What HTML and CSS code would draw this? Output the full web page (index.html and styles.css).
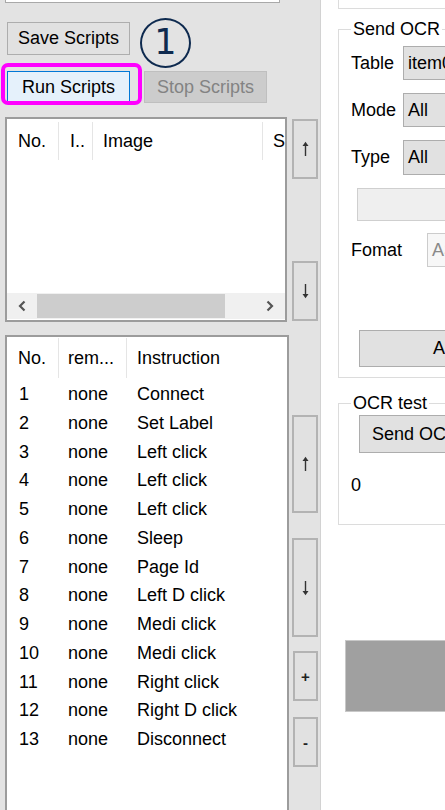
FILE: index.html
```html
<!DOCTYPE html>
<html>
<head>
<meta charset="utf-8">
<link rel="stylesheet" href="styles.css">
</head>
<body>
<div class="app">
  <div class="left">
    <div class="topbox"></div>
    <div class="save-row"><div class="btn">Save Scripts</div></div>
    <div class="run-row">
      <div class="btn btn-run">Run Scripts</div>
      <div class="btn btn-stop">Stop Scripts</div>
    </div>
    <div class="listrow l1">
      <div class="list list1">
        <div class="hdr">
          <div class="hcell c1">No.</div>
          <div class="hcell c2">I..</div>
          <div class="hcell c3">Image</div>
          <div class="hcell c4">S</div>
        </div>
        <div class="lbody"></div>
        <div class="hscroll">
          <div class="sarrow"><svg width="8" height="12" viewBox="0 0 8 12"><polyline points="6.5,1.5 2,6 6.5,10.5" fill="none" stroke="#555" stroke-width="2.2"/></svg></div>
          <div class="thumb"></div>
          <div class="track"></div>
          <div class="sarrow"><svg width="8" height="12" viewBox="0 0 8 12"><polyline points="1.5,1.5 6,6 1.5,10.5" fill="none" stroke="#555" stroke-width="2.2"/></svg></div>
        </div>
      </div>
      <div class="side">
        <div class="sbtn h60"><svg width="7" height="16" viewBox="0 0 7 16"><rect x="2.8" y="4" width="1.4" height="11" fill="#333"/><polygon points="0.5,5 3.5,0.8 6.5,5" fill="#333"/></svg></div>
        <div class="sbtn h60"><svg width="7" height="16" viewBox="0 0 7 16"><rect x="2.8" y="1" width="1.4" height="11" fill="#333"/><polygon points="0.5,11 3.5,15.2 6.5,11" fill="#333"/></svg></div>
      </div>
    </div>
    <div class="listrow l2">
      <div class="list list2">
        <div class="hdr hdr2">
          <div class="hcell d1">No.</div>
          <div class="hcell d2">rem...</div>
          <div class="hcell d3">Instruction</div>
        </div>
        <div class="row"><span class="d1">1</span><span class="d2">none</span><span class="d3">Connect</span></div>
        <div class="row"><span class="d1">2</span><span class="d2">none</span><span class="d3">Set Label</span></div>
        <div class="row"><span class="d1">3</span><span class="d2">none</span><span class="d3">Left click</span></div>
        <div class="row"><span class="d1">4</span><span class="d2">none</span><span class="d3">Left click</span></div>
        <div class="row"><span class="d1">5</span><span class="d2">none</span><span class="d3">Left click</span></div>
        <div class="row"><span class="d1">6</span><span class="d2">none</span><span class="d3">Sleep</span></div>
        <div class="row"><span class="d1">7</span><span class="d2">none</span><span class="d3">Page Id</span></div>
        <div class="row"><span class="d1">8</span><span class="d2">none</span><span class="d3">Left D click</span></div>
        <div class="row"><span class="d1">9</span><span class="d2">none</span><span class="d3">Medi click</span></div>
        <div class="row"><span class="d1">10</span><span class="d2">none</span><span class="d3">Medi click</span></div>
        <div class="row"><span class="d1">11</span><span class="d2">none</span><span class="d3">Right click</span></div>
        <div class="row"><span class="d1">12</span><span class="d2">none</span><span class="d3">Right D click</span></div>
        <div class="row"><span class="d1">13</span><span class="d2">none</span><span class="d3">Disconnect</span></div>
      </div>
      <div class="side side2">
        <div class="sbtn b-up"><svg width="7" height="16" viewBox="0 0 7 16"><rect x="2.8" y="4" width="1.4" height="11" fill="#333"/><polygon points="0.5,5 3.5,0.8 6.5,5" fill="#333"/></svg></div>
        <div class="sbtn b-down"><svg width="7" height="16" viewBox="0 0 7 16"><rect x="2.8" y="1" width="1.4" height="11" fill="#333"/><polygon points="0.5,11 3.5,15.2 6.5,11" fill="#333"/></svg></div>
        <div class="sbtn b-plus">+</div>
        <div class="sbtn b-minus">-</div>
      </div>
    </div>
    <div class="marker">1</div>
    <div class="hilite"></div>
  </div>
  <div class="right">
    <div class="rtop"></div>
    <fieldset class="group g1">
      <legend>Send OCR</legend>
      <div class="frow r-table"><span class="flabel">Table</span><div class="combo">item0</div></div>
      <div class="frow r-mode"><span class="flabel">Mode</span><div class="combo">All</div></div>
      <div class="frow r-type"><span class="flabel">Type</span><div class="combo">All</div></div>
      <div class="emptybox"></div>
      <div class="frow r-fmt"><span class="flabel flabel-wide">Fomat</span><div class="finput">ASCII</div></div>
      <div class="btn gbtn g-apply">Apply</div>
    </fieldset>
    <fieldset class="group g2">
      <legend>OCR test</legend>
      <div class="btn gbtn g-send">Send OCR</div>
      <div class="zero">0</div>
    </fieldset>
    <div class="grayblock"></div>
  </div>
</div>
</body>
</html>
```

FILE: styles.css
```css
* { box-sizing: border-box; }
html, body { margin: 0; padding: 0; }
body {
  width: 445px;
  height: 810px;
  overflow: hidden;
  font-family: "Liberation Sans", Arial, sans-serif;
  font-size: 18px;
  color: #000;
  background: #fff;
}
.app { display: flex; height: 810px; }

.left {
  position: relative;
  width: 321px;
  flex: none;
  height: 810px;
  overflow: hidden;
  background: #e3e3e3;
  border-right: 1px solid #d2d2d2;
  padding-left: 5px;
  display: flex;
  flex-direction: column;
}
.topbox {
  width: 275px;
  height: 3px;
  flex: none;
  background: #fff;
  border: 1px solid #a9a9a9;
  border-top: none;
}
.btn {
  height: 33px;
  width: 123px;
  background: #e1e1e1;
  border: 1px solid #adadad;
  display: flex;
  align-items: center;
  justify-content: center;
  white-space: nowrap;
}
.save-row { margin-top: 19px; padding-left: 2px; flex: none; }
.run-row { margin-top: 16px; padding-left: 2px; display: flex; gap: 14px; flex: none; }
.run-row .btn { height: 32px; }
.btn-run { background: #e5f1fb; border-color: #0078d7; }
.btn-stop { background: #cccccc; border-color: #bfbfbf; color: #838383; }

.listrow { display: flex; flex: none; }
.l1 { margin-top: 14px; height: 205px; }
.l2 { margin-top: 13px; height: 485px; }
.list {
  background: #fff;
  border: 2px solid #9c9c9c;
  display: flex;
  flex-direction: column;
  overflow: hidden;
}
.list1 { width: 282px; }
.list2 { width: 284px; }

.hdr { display: flex; height: 44px; flex: none; }
.hcell {
  margin-top: 3px;
  height: 38px;
  line-height: 38px;
  border-right: 1px solid #e5e5e5;
  padding-left: 11px;
  white-space: nowrap;
  overflow: hidden;
  flex: none;
}
.c1 { width: 52px; }
.c2 { width: 34px; }
.c3 { width: 170px; padding-left: 10px; }
.c4 { border-right: none; padding-left: 10px; width: 30px; }
.lbody { flex: 1; }
.hscroll {
  height: 26px;
  margin-bottom: 1px;
  background: #f0f0f0;
  display: flex;
  flex: none;
}
.sarrow { width: 30px; display: flex; align-items: center; justify-content: center; }
.thumb { width: 188px; background: #cdcdcd; margin: 1px 0; }
.track { flex: 1; }

.hdr2 { height: 43px; }
.hdr2 .hcell { margin-top: 1px; height: 40px; line-height: 40px; }
.d1 { width: 52px; padding-left: 12px; flex: none; }
.d2 { width: 68px; padding-left: 9px; flex: none; }
.d3 { padding-left: 10px; border-right: none; flex: none; }
.hdr2 .d1 { padding-left: 11px; }
.row { display: flex; height: 28.75px; line-height: 28.75px; white-space: nowrap; }

.side { width: 26px; margin-left: 5px; display: flex; flex-direction: column; flex: none; }
.l1 .side { justify-content: space-between; padding: 2px 0 1px; }
.sbtn {
  background: #e1e1e1;
  border: 2px solid #b3b3b3;
  display: flex;
  align-items: center;
  justify-content: center;
  flex: none;
}
.h60 { height: 60px; }
.side2 { margin-left: 3px; padding-top: 80px; }
.b-up { height: 98px; }
.b-down { height: 99px; margin-top: 25px; }
.b-plus, .b-minus {
  height: 50px;
  margin-left: 1px;
  font-weight: bold;
  font-size: 15px;
  color: #222;
}
.b-plus { margin-top: 14px; }
.b-minus { margin-top: 16px; }

.marker {
  position: absolute;
  left: 140px;
  top: 18px;
  width: 51px;
  height: 50px;
  border: 2.5px solid #0e2a4f;
  border-radius: 50%;
  color: #0e2a4f;
  font-family: "DejaVu Sans", sans-serif;
  font-weight: normal;
  font-size: 35px;
  line-height: 45px;
  text-align: center;
}
.hilite {
  position: absolute;
  left: 1px;
  top: 63px;
  width: 141px;
  height: 42px;
  border: 4px solid #ff00ff;
  border-radius: 7px;
}

.right {
  flex: 1;
  overflow: hidden;
  padding-left: 17px;
  display: flex;
  flex-direction: column;
  height: 810px;
}
.rtop {
  height: 9px;
  width: 200px;
  flex: none;
  border-left: 1px solid #dcdcdc;
  border-bottom: 1px solid #dcdcdc;
}
.group {
  width: 200px;
  min-width: 0;
  flex: none;
  margin: 0;
  border: 1px solid #dcdcdc;
  padding: 0 0 10px 12px;
}
.group legend {
  padding: 0 2px;
  line-height: 20px;
  font-size: 18px;
}
.g1 { margin-top: 10px; }
.frow { display: flex; align-items: center; height: 34px; }
.flabel { width: 52px; flex: none; }
.flabel-wide { width: 76px; }
.combo {
  height: 34px;
  width: 120px;
  background: #e1e1e1;
  border: 1px solid #adadad;
  padding-left: 4px;
  line-height: 32px;
}
.r-table { margin-top: 7px; }
.r-mode { margin-top: 13px; }
.r-type { margin-top: 13px; height: 35px; }
.r-type .combo { height: 35px; }
.emptybox {
  margin-top: 13px;
  margin-left: 6px;
  height: 33px;
  width: 120px;
  background: #efefef;
  border: 1px solid #cfcfcf;
}
.r-fmt { margin-top: 12px; }
.finput {
  height: 34px;
  width: 120px;
  background: #f7f7f7;
  border: 1px solid #cccccc;
  color: #8a8a8a;
  padding-left: 4px;
  line-height: 32px;
}
.gbtn {
  margin-left: 8px;
  width: 160px;
  justify-content: flex-start;
}
.g-apply { margin-top: 63px; height: 37px; padding-left: 73px; }
.g2 { margin-top: 15px; padding-bottom: 0; height: 132px; }
.g-send { margin-top: 2px; height: 38px; padding-left: 12px; }
.zero { margin-top: 20px; line-height: 24px; }
.grayblock {
  margin-top: 115px;
  margin-left: 7px;
  height: 72px;
  width: 200px;
  flex: none;
  background: #a0a0a0;
  border: 1px solid #c8c8c8;
}
```
